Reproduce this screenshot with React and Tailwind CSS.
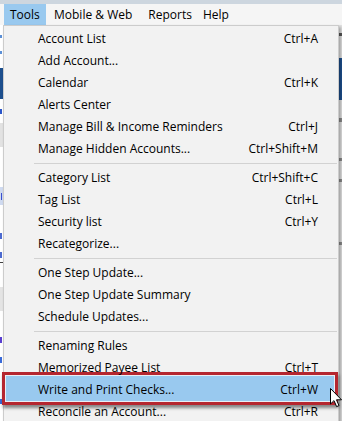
import React from "react";

const groups = [
  [
    ["Account List", "Ctrl+A"],
    ["Add Account...", ""],
    ["Calendar", "Ctrl+K"],
    ["Alerts Center", ""],
    ["Manage Bill & Income Reminders", "Ctrl+J"],
    ["Manage Hidden Accounts...", "Ctrl+Shift+M"],
  ],
  [
    ["Category List", "Ctrl+Shift+C"],
    ["Tag List", "Ctrl+L"],
    ["Security list", "Ctrl+Y"],
    ["Recategorize...", ""],
  ],
  [
    ["One Step Update...", ""],
    ["One Step Update Summary", ""],
    ["Schedule Updates...", ""],
  ],
  [
    ["Renaming Rules", ""],
    ["Memorized Payee List", "Ctrl+T"],
    ["Write and Print Checks...", "Ctrl+W", true],
    ["Reconcile an Account...", "Ctrl+R"],
  ],
];

function Item({ label, shortcut, active }) {
  return (
    <div className="relative h-[22px] flex items-center pl-[34px] pr-[20px]">
      {active && (
        <div className="absolute -left-[2px] -top-[7px] right-0 -bottom-[4px] z-0 border-[3px] border-[#b5262f] shadow-[1px_3px_3px_rgba(0,0,0,0.45)]">
          <div className="h-full w-full border border-[#e9eef4] bg-[#99c9ef]" />
        </div>
      )}
      <span className="relative z-10 flex-1 whitespace-nowrap">{label}</span>
      <span className="relative z-10 whitespace-nowrap">{shortcut}</span>
    </div>
  );
}

function Separator() {
  return (
    <div className="h-[7px] flex items-center pl-[30px] pr-[1px]">
      <div className="h-px w-full bg-[#d2d2d2]" />
    </div>
  );
}

export default function App() {
  return (
    <div
      className="relative w-[342px] h-[421px] overflow-hidden bg-white text-[12px] text-black"
      style={{ fontFamily: '"Open Sans", "Noto Sans", sans-serif' }}
    >
      <div className="h-[4px] bg-[#cdd6df]" />
      <div className="h-[21px] bg-[#f5f5f5] flex items-stretch">
        <div className="ml-[4px] w-[42px] bg-[#99c9ef] flex items-center pl-[6px]">Tools</div>
        <div className="ml-[8px] flex items-center">Mobile &amp; Web</div>
        <div className="ml-[16px] flex items-center">Reports</div>
        <div className="ml-[11px] flex items-center">Help</div>
      </div>

      {/* background application visible at the edges */}
      <div className="flex h-[396px]">
        <div className="w-[3px] flex flex-col">
          <div className="h-[10px]" />
          <div className="h-[3px] w-[2px] bg-[#5b8fd6]" />
          <div className="h-[13px]" />
          <div className="h-[3px] w-[2px] bg-[#5b8fd6]" />
          <div className="h-[14px]" />
          <div className="h-[31px] bg-[#1d4f8e]" />
          <div className="h-[10px]" />
          <div className="h-[5px] w-[2px] bg-[#2a56c9]" />
          <div className="h-[9px]" />
          <div className="h-[24px] bg-[#e2e2e2]" />
          <div className="h-[40px]" />
          <div className="h-[18px] bg-[#cfdaf0] flex items-center">
            <div className="h-[7px] w-[1px] ml-[1px] bg-[#3a4fd0]" />
          </div>
          <div className="h-[28px]" />
          <div className="h-[6px] w-[2px] bg-[#4c6ad0]" />
          <div className="h-[13px]" />
          <div className="h-[6px] w-[2px] bg-[#4c6ad0]" />
          <div className="h-[4px]" />
          <div className="h-px bg-[#404040]" />
          <div className="h-[24px]" />
          <div className="h-[24px] bg-[#e4e4e4]" />
          <div className="h-[26px]" />
          <div className="h-[6px] w-[2px] bg-[#5a3fd0]" />
          <div className="h-[14px]" />
          <div className="h-[6px] w-[2px] bg-[#3a6ad8]" />
          <div className="h-[36px]" />
          <div className="h-[5px] w-[2px] bg-[#3a6ad8]" />
        </div>
        <div className="flex-1" />
        <div className="w-[3px] flex flex-col bg-[#e4e4e4]">
          <div className="h-[8px]" />
          <div className="h-[3px] bg-[#555]" />
          <div className="h-[22px]" />
          <div className="h-[42px] bg-[#1d4f8e]" />
          <div className="h-[18px]" />
          <div className="h-[4px] bg-[#8a8a8a]" />
          <div className="h-[36px]" />
          <div className="h-[3px] bg-[#8a8a8a]" />
          <div className="h-[18px]" />
          <div className="h-[3px] bg-[#8a8a8a]" />
          <div className="h-[60px]" />
          <div className="h-[3px] bg-[#8a8a8a]" />
        </div>
      </div>

      {/* Tools dropdown menu */}
      <div className="absolute left-[3px] top-[25px] w-[336px] border border-[#cccccc] bg-[#f2f2f2] pt-[2px] shadow-[2px_2px_3px_rgba(0,0,0,0.3)]">
        {groups.map((g, gi) => (
          <React.Fragment key={gi}>
            {gi > 0 && <Separator />}
            {g.map(([label, sc, active]) => (
              <Item key={label} label={label} shortcut={sc} active={active} />
            ))}
          </React.Fragment>
        ))}
      </div>

      {/* mouse pointer */}
      <svg
        className="absolute left-[330px] top-[388px]"
        width="13"
        height="20"
        viewBox="0 0 13 20"
      >
        <path
          d="M0.5 0.5 L0.5 16 L4 12.6 L6.6 18.6 L9 17.6 L6.5 11.8 L11.5 11.8 Z"
          fill="white"
          stroke="black"
          strokeWidth="1"
          strokeLinejoin="round"
        />
      </svg>
    </div>
  );
}
